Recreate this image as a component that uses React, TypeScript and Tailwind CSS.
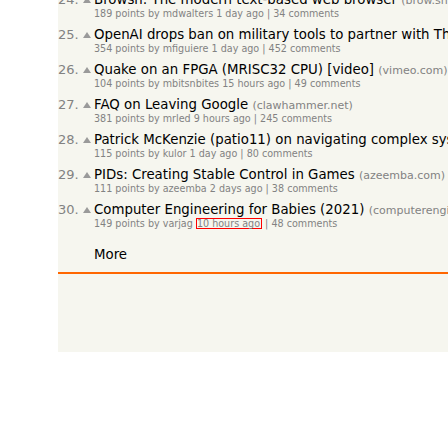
import React from "react";

type Story = {
  rank: number;
  title: string;
  site?: string;
  points: number;
  user: string;
  age: string;
  comments: number;
  boxed?: boolean;
};

const stories: Story[] = [
  { rank: 24, title: "Browsh: The modern text-based web browser", site: "brow.sh", points: 189, user: "mdwalters", age: "1 day ago", comments: 34 },
  { rank: 25, title: "OpenAI drops ban on military tools to partner with The Pentagon", site: "cnbc.com", points: 354, user: "mfiguiere", age: "1 day ago", comments: 452 },
  { rank: 26, title: "Quake on an FPGA (MRISC32 CPU) [video]", site: "vimeo.com", points: 104, user: "mbitsnbites", age: "15 hours ago", comments: 49 },
  { rank: 27, title: "FAQ on Leaving Google", site: "clawhammer.net", points: 381, user: "mrled", age: "9 hours ago", comments: 245 },
  { rank: 28, title: "Patrick McKenzie (patio11) on navigating complex systems", site: "complexsystemspodcast.com", points: 115, user: "kulor", age: "1 day ago", comments: 80 },
  { rank: 29, title: "PIDs: Creating Stable Control in Games", site: "azeemba.com", points: 111, user: "azeemba", age: "2 days ago", comments: 38 },
  { rank: 30, title: "Computer Engineering for Babies (2021)", site: "computerengineeringforbabies.com", points: 149, user: "varjag", age: "10 hours ago", comments: 48, boxed: true },
];

const VoteArrow = () => (
  <svg width="8" height="6" viewBox="0 0 8 6" className="block">
    <polygon points="4,0 8,6 0,6" fill="#9a9a9a" />
  </svg>
);

const Row = ({ s }: { s: Story }) => (
  <div className="h-[35px] whitespace-nowrap">
    <div className="flex items-baseline h-[17px] leading-[17px]">
      <span className="w-[25px] shrink-0 text-[#828282] text-[13px]">{s.rank}.</span>
      <span className="w-[11px] shrink-0 self-center">
        <VoteArrow />
      </span>
      <span className="text-[13.33px] font-normal text-black">
        {s.title}{" "}
        {s.site && <span className="text-[11px] text-[#828282]">({s.site})</span>}
      </span>
    </div>
    <div className="pl-[36px] h-[12px] leading-[12px] text-[9.6px] text-[#828282]">
      {s.points} points by {s.user}{" "}
      {s.boxed ? (
        <span className="inline-block border border-[#ff0000] leading-[9px] pr-[1px]">{s.age}</span>
      ) : (
        s.age
      )}{" "}
      | {s.comments} comments
    </div>
  </div>
);

const App = () => {
  return (
    <div
      className="w-[448px] h-[448px] overflow-hidden bg-white"
      style={{ fontFamily: '"DejaVu Sans", Verdana, sans-serif' }}
    >
      <div className="ml-[58px] h-[352px] bg-[#f6f6ef] overflow-hidden">
        <div className="mt-[-9px]">
          {stories.map((s) => (
            <Row key={s.rank} s={s} />
          ))}
        </div>
        <div className="pl-[36px] pt-[10px] text-[13.33px] leading-[17px] text-black">More</div>
        <div className="mt-[9px] h-[2px] bg-[#ff6600]" />
      </div>
    </div>
  );
};

export default App;
